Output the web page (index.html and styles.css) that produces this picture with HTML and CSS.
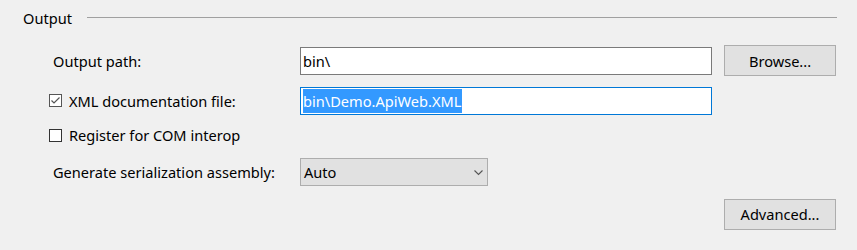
FILE: index.html
```html
<!DOCTYPE html>
<html>
<head>
<meta charset="utf-8">
<link rel="stylesheet" href="styles.css">
</head>
<body>
<div class="panel">
  <div class="group-header">
    <span class="group-title">Output</span>
    <span class="group-line"></span>
  </div>
  <div class="form">
    <div class="label">Output path:</div>
    <div class="field"><div class="textbox"><span>bin\</span></div></div>
    <div class="action"><button class="btn">Browse...</button></div>

    <div class="check-label"><span class="checkbox checked"><svg width="9" height="7" viewBox="0 0 9 7"><path d="M0.5 3.5 L3 6 L8.5 0.5" fill="none" stroke="#555" stroke-width="1.2"/></svg></span><span>XML documentation file:</span></div>
    <div class="field"><div class="textbox focused"><span class="selected">bin\Demo.ApiWeb.XML</span></div></div>
    <div class="action"></div>

    <div class="check-label"><span class="checkbox"></span><span>Register for COM interop</span></div>
    <div class="field"></div>
    <div class="action"></div>

    <div class="label">Generate serialization assembly:</div>
    <div class="field"><div class="dropdown"><span>Auto</span><svg class="chevron" width="9" height="6" viewBox="0 0 9 6"><path d="M0.5 0.5 L4.5 4.5 L8.5 0.5" fill="none" stroke="#555" stroke-width="1.1"/></svg></div></div>
    <div class="action"></div>

    <div class="label"></div>
    <div class="field"></div>
    <div class="action"><button class="btn">Advanced...</button></div>
  </div>
</div>
</body>
</html>
```
FILE: styles.css
```css
* { box-sizing: border-box; }
html, body {
  margin: 0;
  padding: 0;
  background: #f0f0f0;
}
body {
  width: 857px;
  height: 250px;
  overflow: hidden;
  font-family: "Noto Sans", "Open Sans", sans-serif;
  font-size: 14.6px;
  color: #000;
}
.panel {
  padding-right: 20px;
}
.group-header {
  display: flex;
  align-items: center;
  height: 36px;
  padding-left: 23px;
  margin-bottom: 4px;
}
.group-title {
  margin-right: 15px;
}
.group-line {
  flex: 1;
  height: 1px;
  background: #a0a0a0;
  margin-top: -2px;
}
.form {
  display: grid;
  grid-template-columns: 300px 412px 124px;
  grid-template-rows: 41px 39px 30px 44px 40px;
  align-items: center;
}
.label {
  padding-left: 53px;
}
.check-label {
  padding-left: 49px;
  display: flex;
  align-items: center;
}
.checkbox {
  width: 13px;
  height: 13px;
  border: 1px solid #333;
  background: #fff;
  margin-right: 7px;
  display: flex;
  align-items: center;
  justify-content: center;
}
.checkbox.checked {
  border-color: #555;
}
.textbox {
  height: 28px;
  background: #fff;
  border: 1px solid #7a7a7a;
  display: flex;
  align-items: center;
  padding-left: 2px;
}
.textbox.focused {
  border-color: #0078d7;
}
.selected {
  background: #3399ff;
  color: #fff;
  line-height: 24px;
  padding-right: 1px;
}
.action {
  display: flex;
  justify-content: flex-end;
}
.btn {
  width: 112px;
  height: 31px;
  background: #e1e1e1;
  border: 1px solid #adadad;
  font: inherit;
  color: #000;
  padding: 0;
}
.dropdown {
  width: 188px;
  height: 28px;
  background: #e1e1e1;
  border: 1px solid #adadad;
  display: flex;
  align-items: center;
  justify-content: space-between;
  padding-left: 3px;
  padding-right: 4px;
}
.chevron {
  margin-top: 1px;
}
```
